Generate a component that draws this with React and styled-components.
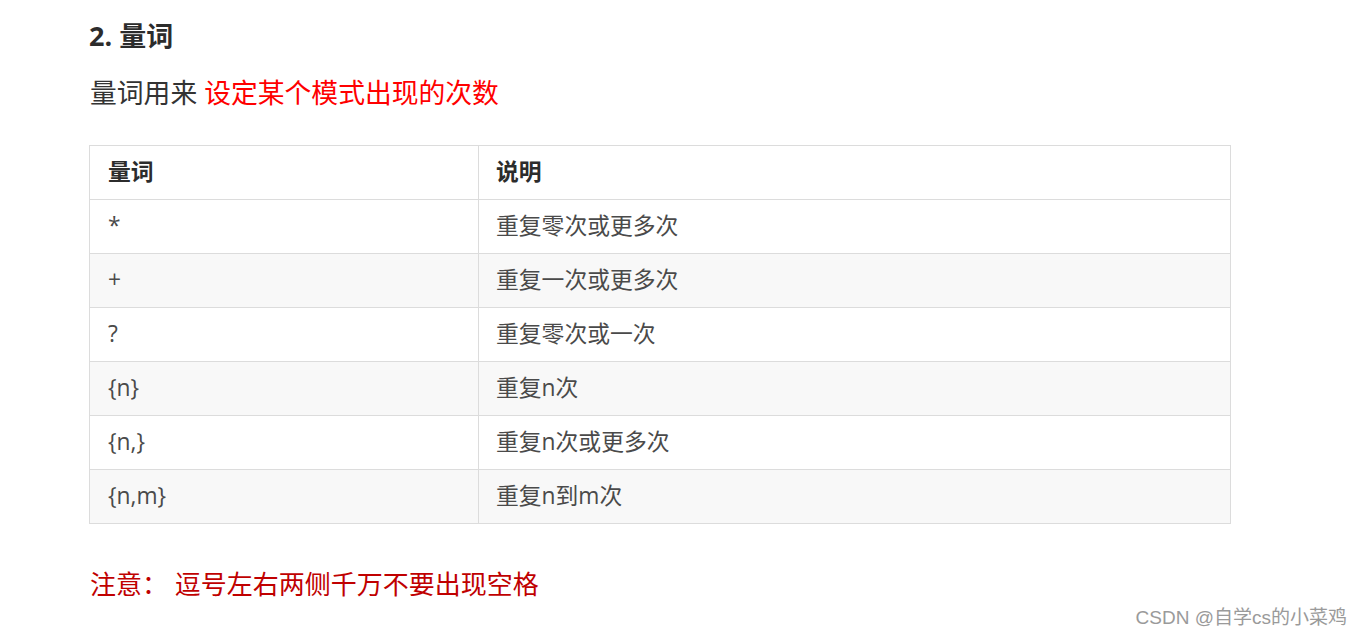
import React from 'react';
import styled, { createGlobalStyle } from 'styled-components';

const GlobalStyle = createGlobalStyle`
  html, body {
    margin: 0;
    padding: 0;
    background: #fff;
  }
  body {
    font-family: "Open Sans", "Noto Sans CJK SC", sans-serif;
    color: #333;
  }
`;

const Page = styled.div`
  position: relative;
  width: 1362px;
  height: 637px;
  overflow: hidden;
  padding: 18px 0 0 89px;
  box-sizing: border-box;
`;

const Heading = styled.h2`
  margin: 0;
  height: 36px;
  line-height: 36px;
  font-size: 27px;
  font-weight: 700;
  color: #2c2c2c;
`;

const Lead = styled.p`
  margin: 21px 0 0 1px;
  height: 36px;
  line-height: 36px;
  font-size: 26.8px;
  color: #333;
`;

const Red = styled.span`
  color: ${(p) => p.$tone || '#ff0000'};
`;

const Table = styled.table`
  margin-top: 34px;
  width: 1142px;
  border-collapse: collapse;
  font-size: 22.8px;
`;

const Row = styled.tr`
  height: 54px;
  background: ${(p) => (p.$striped ? '#f8f8f8' : '#fff')};
`;

const Cell = styled.td`
  border: 1.5px solid #dcdcdc;
  padding: 0 18px 0 ${(p) => p.$pl || '18px'};
  width: ${(p) => p.$w || 'auto'};
  color: ${(p) => (p.$head ? '#2c2c2c' : '#4a4a4a')};
  font-weight: ${(p) => (p.$head ? 700 : 400)};
  vertical-align: middle;
  line-height: 1;
`;

const Note = styled.p`
  margin: 42px 0 0 1px;
  height: 36px;
  line-height: 36px;
  font-size: 26px;
  color: #c00000;
  white-space: pre;
`;

const Watermark = styled.div`
  position: absolute;
  right: 15px;
  bottom: 8px;
  font-family: "Liberation Sans", "Noto Sans CJK SC", sans-serif;
  font-size: 19px;
  color: #9a9a9a;
`;

const rows = [
  ['*', '重复零次或更多次'],
  ['+', '重复一次或更多次'],
  ['?', '重复零次或一次'],
  ['{n}', '重复n次'],
  ['{n,}', '重复n次或更多次'],
  ['{n,m}', '重复n到m次'],
];

export default function App() {
  return (
    <>
      <GlobalStyle />
      <Page>
        <Heading>2. 量词</Heading>
        <Lead>
          量词用来 <Red>设定某个模式出现的次数</Red>
        </Lead>
        <Table>
          <tbody>
            <Row>
              <Cell $head $w="352px">量词</Cell>
              <Cell $head $pl="17px">说明</Cell>
            </Row>
            {rows.map(([q, d], i) => (
              <Row key={q} $striped={i % 2 === 1}>
                <Cell>{q}</Cell>
                <Cell $pl="17px">{d}</Cell>
              </Row>
            ))}
          </tbody>
        </Table>
        <Note>注意： 逗号左右两侧千万不要出现空格</Note>
        <Watermark>CSDN @自学cs的小菜鸡</Watermark>
      </Page>
    </>
  );
}
